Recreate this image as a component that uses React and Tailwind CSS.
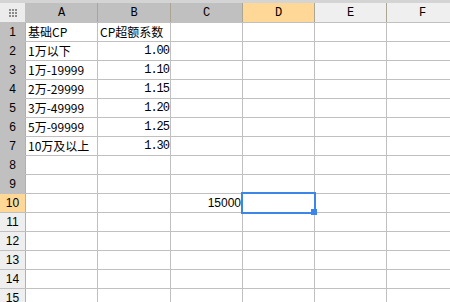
import React from 'react';

const cols = [
  { key: 'A', w: 'w-[72px]', head: 'bg-[#c0c0c0]' },
  { key: 'B', w: 'w-[73px]', head: 'bg-[#c0c0c0]' },
  { key: 'C', w: 'w-[72px]', head: 'bg-[#c0c0c0]' },
  { key: 'D', w: 'w-[72px]', head: 'bg-[#ffd897]' },
  { key: 'E', w: 'w-[72px]', head: 'bg-[#efefef]' },
  { key: 'F', w: 'w-[72px]', head: 'bg-[#efefef]' },
];

const data = {
  1: { A: '基础CP', B: 'CP超额系数' },
  2: { A: '1万以下', B: '1.00' },
  3: { A: '1万-19999', B: '1.10' },
  4: { A: '2万-29999', B: '1.15' },
  5: { A: '3万-49999', B: '1.20' },
  6: { A: '5万-99999', B: '1.25' },
  7: { A: '10万及以上', B: '1.30' },
  10: { C: '15000' },
};

function rowHeadBg(n) {
  if (n === 10) return 'bg-[#ffd897]';
  if (n < 10) return 'bg-[#c0c0c0]';
  return 'bg-[#efefef]';
}

function Cell({ col, value }) {
  const isNum = value && /^[0-9.]+$/.test(value);
  let font = "font-['Noto_Sans_CJK_SC',sans-serif] text-[12px]";
  if (isNum && col === 'B') font = "font-['Liberation_Mono',monospace] text-[12px] tracking-[-1px]";
  if (isNum && col === 'C') font = "font-['Liberation_Sans',sans-serif] text-[12px]";
  return (
    <div
      className={`${cols.find((c) => c.key === col).w} shrink-0 h-full border-r border-[#c0c0c0] flex items-center overflow-hidden whitespace-nowrap text-black leading-none ${
        isNum ? 'justify-end pr-[1px]' : 'pl-[2px]'
      } ${font}`}
    >
      {value}
    </div>
  );
}

export default function App() {
  const rows = Array.from({ length: 15 }, (_, i) => i + 1);

  return (
    <div className="relative w-[450px] h-[302px] overflow-hidden bg-white select-none">
      <div className="h-[3px] bg-[#d4d4d4]" />

      {/* column headers */}
      <div className="flex h-[20px] border-b border-[#c0c0c0]">
        <div className="w-[26px] shrink-0 border-r border-[#c0c0c0] bg-[#ececec] flex items-center justify-center">
          <div className="grid grid-cols-3 gap-[1px]">
            {Array.from({ length: 9 }, (_, i) => (
              <div key={i} className="w-[2px] h-[2px] bg-[#8a8a8a]" />
            ))}
          </div>
        </div>
        {cols.map((c) => (
          <div
            key={c.key}
            className={`${c.w} ${c.head} shrink-0 border-r border-[#aba694] flex items-center justify-center font-['Liberation_Mono',monospace] text-[12px] text-black`}
          >
            {c.key}
          </div>
        ))}
      </div>

      {/* rows */}
      {rows.map((n) => (
        <div key={n} className="flex h-[19px] border-b border-[#c0c0c0]">
          <div
            className={`w-[26px] shrink-0 border-r border-[#b0b0b0] ${rowHeadBg(n)} flex items-center justify-center font-['Liberation_Sans',sans-serif] text-[12px] text-black`}
          >
            {n}
          </div>
          {cols.map((c) => (
            <Cell key={c.key} col={c.key} value={data[n] && data[n][c.key]} />
          ))}
        </div>
      ))}

      {/* active cell D10 */}
      <div className="absolute left-[241px] top-[192px] w-[75px] h-[22px] border-2 border-[#3b86e8]" />
      <div className="absolute left-[311px] top-[209px] w-[6px] h-[6px] bg-[#3b86e8]" />
    </div>
  );
}
